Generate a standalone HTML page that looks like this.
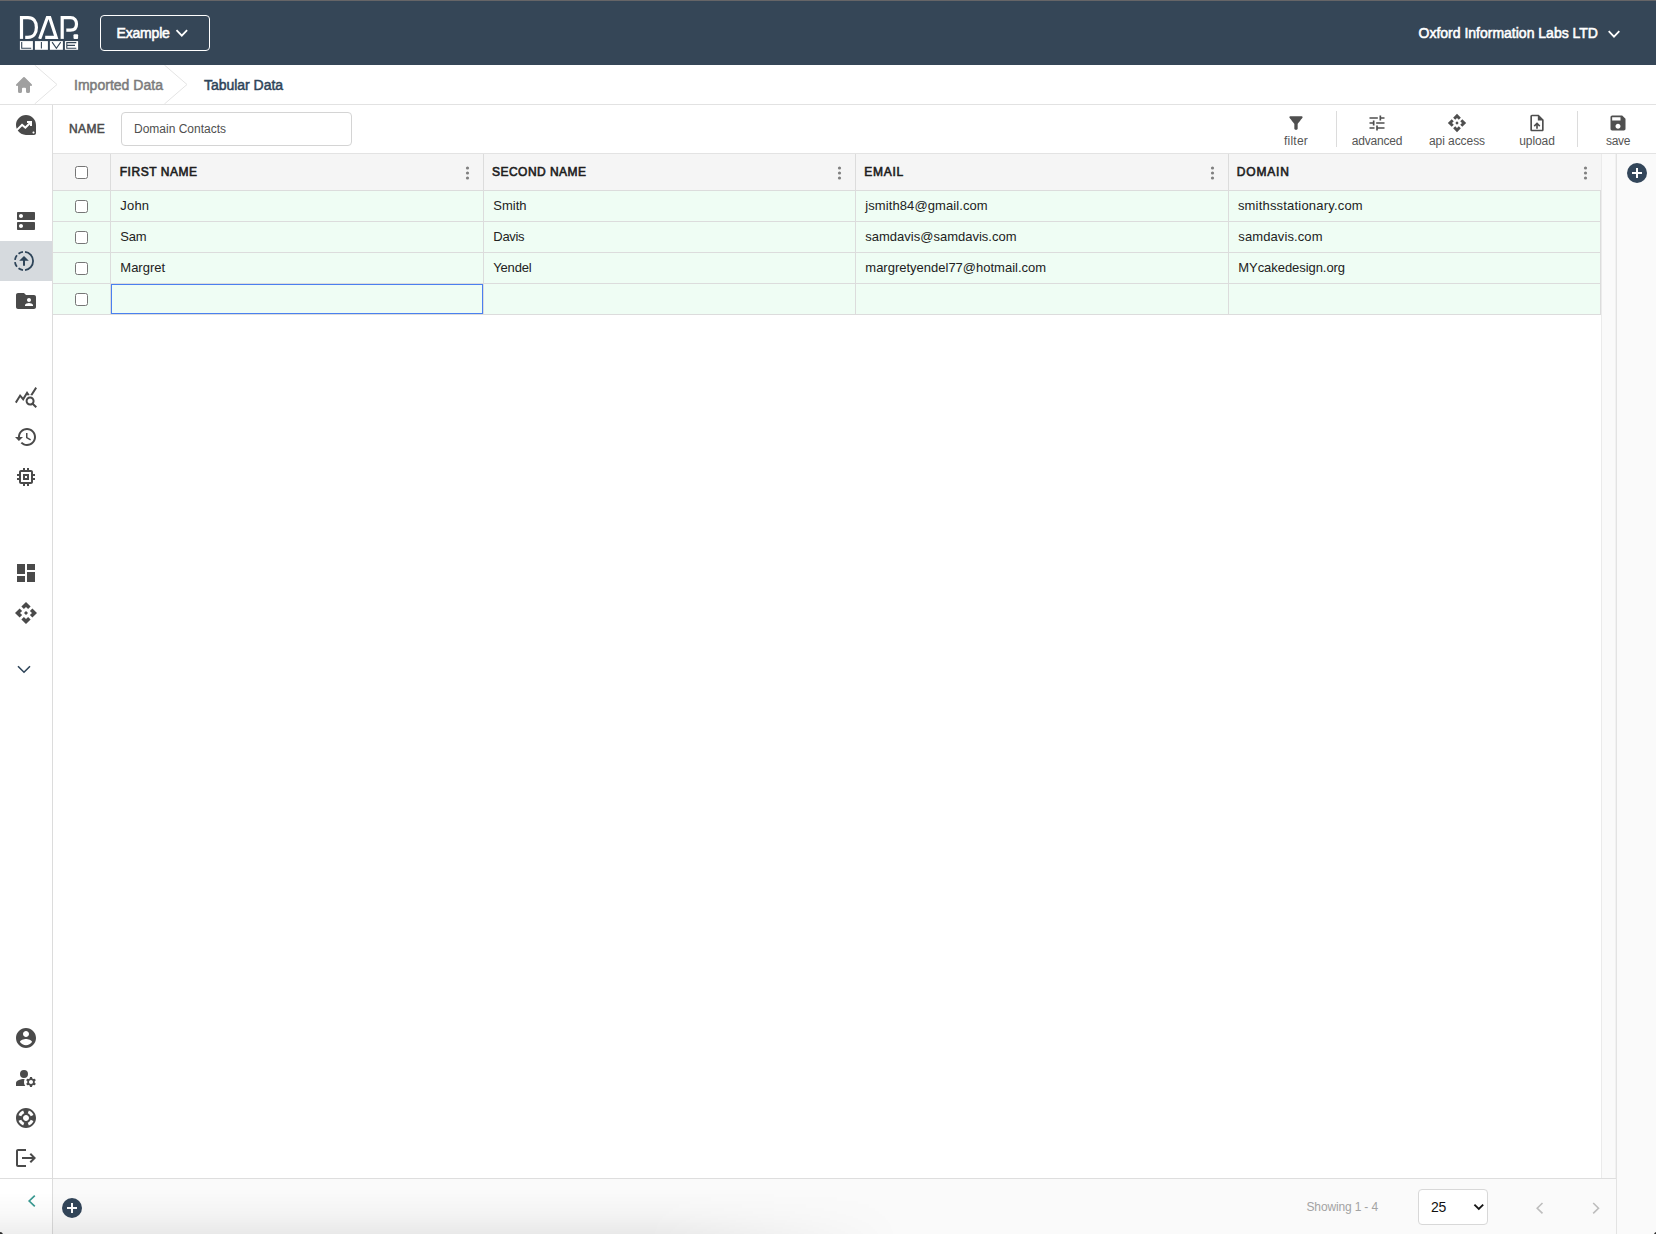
<!DOCTYPE html>
<html>
<head>
<meta charset="utf-8">
<title>DAP Live - Tabular Data</title>
<style>
*{box-sizing:border-box;margin:0;padding:0}
html,body{width:1656px;height:1234px;overflow:hidden;background:#fff}
body{font-family:"Liberation Sans",sans-serif;color:#222;position:relative}
.abs{position:absolute}
.t{position:absolute;white-space:nowrap;line-height:1}
/* header */
#hdr{left:0;top:0;width:1656px;height:65px;background:#354657}
#hdrtop{left:0;top:0;width:1656px;height:1px;background:#666567}
#exbtn{left:100px;top:15px;width:110px;height:36px;border:1px solid #fff;border-radius:4px}
/* breadcrumb */
#bc{left:0;top:65px;width:1656px;height:40px;background:#fff;border-bottom:1px solid #e2e2e2}
/* sidebar */
#sb{left:0;top:105px;width:53px;height:1129px;background:#fff;border-right:1px solid #dcdcdc}
#sbsel{left:0;top:241px;width:52px;height:40px;background:#d6dade}
.ic{position:absolute;width:24px;height:24px}
.ic svg{display:block;width:24px;height:24px;fill:#4a4a4a}
/* toolbar */
#tb{left:53px;top:105px;width:1603px;height:49px;background:#fff;border-bottom:1px solid #e3e3e3}
#nameinp{left:121px;top:112px;width:231px;height:34px;border:1px solid #d4d4d4;border-radius:4px;background:#fff}
.tbl{position:absolute;font-size:12px;color:#555;line-height:1;white-space:nowrap;transform:translateX(-50%)}
.vdiv{position:absolute;width:1px;background:#dcdcdc;top:111px;height:36px}
/* table */
#thead{left:53px;top:154px;width:1548px;height:37px;background:#f5f5f5;border-bottom:1px solid #dcdcdc}
.row{position:absolute;left:53px;width:1548px;height:31px;background:#effdf4;border-bottom:1px solid #dcdcdc}
.cb{position:absolute;left:75px;width:13px;height:13px;border:1px solid #767676;border-radius:2.5px;background:#fff}
.vl{position:absolute;width:1px;top:154px;height:161px;background:#dcdcdc}
.th{position:absolute;top:166px;font-size:12px;font-weight:normal;-webkit-text-stroke:0.6px #1e1e1e;letter-spacing:1.1px;color:#1e1e1e;line-height:1;white-space:nowrap}
.td{position:absolute;font-size:13px;color:#222;line-height:1;white-space:nowrap}
/* right */
#gut{left:1601px;top:154px;width:15px;height:1024px;background:#fafafa;border-left:1px solid #ebebeb;border-right:1px solid #f1f1f1}
#rp{left:1616px;top:154px;width:40px;height:1080px;background:#fafafa;border-left:1px solid #e3e3e3}
/* footer */
#ft{left:53px;top:1178px;width:1563px;height:56px;background:#fafafa;border-top:1px solid #dedede}
#sbft{left:0;top:1178px;width:52px;height:56px;background:#fff;border-top:1px solid #dedede}
#shade{left:0;top:1192px;width:900px;height:42px;background:linear-gradient(to bottom,rgba(0,0,0,0) 0%,rgba(0,0,0,0.022) 50%,rgba(0,0,0,0.068) 100%);-webkit-mask-image:linear-gradient(to right,#000 0%,#000 72%,transparent 100%);mask-image:linear-gradient(to right,#000 0%,#000 72%,transparent 100%);pointer-events:none}
#sel{left:1418px;top:1189px;width:70px;height:36px;border:1px solid #d8d8d8;border-radius:4px;background:#fff}
.plus{position:absolute;width:20px;height:20px;border-radius:50%;background:#33465a}
.plus:before{content:"";position:absolute;left:5px;top:9px;width:10px;height:2px;background:#fff}
.plus:after{content:"";position:absolute;left:9px;top:5px;width:2px;height:10px;background:#fff}
</style>
</head>
<body>
<!-- HEADER -->
<div class="abs" id="hdr"></div>
<div class="abs" id="hdrtop"></div>
<svg class="abs" style="left:19px;top:15px" width="61" height="36" viewBox="19 15 61 36">
<defs><clipPath id="lc"><rect x="19" y="16" width="61" height="22.9"/></clipPath></defs>
<g fill="none" stroke="#fff" stroke-width="3.2">
<path d="M21.5 16 V38.9"/>
<path d="M21.5 17.6 H28 C33.5 17.6 36.4 21.6 36.4 27.4 C36.4 33.2 33.5 37.3 28 37.3 H25.2" stroke-linejoin="round"/>
<path d="M39.7 38.9 L48.6 14.2 L56.15 37.3 H45.2" stroke-linejoin="miter" stroke-miterlimit="10" clip-path="url(#lc)"/>
<path d="M62.2 38.9 V16"/>
<path d="M62.2 17.6 H70.4 C74.6 17.6 76.5 20.4 76.5 23.9 C76.5 27.4 74.6 30.1 70.4 30.1 H66.3"/>
</g>
<rect x="73.5" y="34.3" width="4.6" height="4.6" rx="1" fill="#fff"/>
<g fill="#fff">
<rect x="19.9" y="41.1" width="13" height="8.7"/><rect x="34.9" y="41.1" width="13" height="8.7"/><rect x="49.9" y="41.1" width="13" height="8.7"/><rect x="64.9" y="41.1" width="13.2" height="8.7"/>
</g>
<g fill="none" stroke="#354657" stroke-width="1.1">
<path d="M21.7 42.1 V48.2 H31.2"/>
<path d="M41.4 42.1 V48.6"/>
<path d="M52.1 42.1 L56.4 48.3 L60.7 42.1"/>
<path d="M76.3 42.6 H66.8 V48.3 H76.3 M66.8 45.4 H75"/>
</g>
</svg>
<div class="abs" id="exbtn"></div>
<div class="t" id="extxt" style="left:116.5px;top:26px;font-size:14px;font-weight:normal;-webkit-text-stroke:0.55px #fff;letter-spacing:-0.18px;color:#fff">Example</div>
<svg class="abs" style="left:174px;top:27px" width="16" height="12" viewBox="0 0 16 12"><path d="M2.5 3.2 L7.8 8.6 L13.1 3.2" fill="none" stroke="#fff" stroke-width="1.8"/></svg>
<div class="t" id="orgtxt" style="left:1418.5px;top:26px;font-size:14px;font-weight:normal;-webkit-text-stroke:0.55px #fff;letter-spacing:0px;color:#fff">Oxford Information Labs LTD</div>
<svg class="abs" style="left:1606px;top:28px" width="16" height="12" viewBox="0 0 16 12"><path d="M2.7 3.2 L8 8.6 L13.3 3.2" fill="none" stroke="#fff" stroke-width="1.8"/></svg>

<!-- BREADCRUMB -->
<div class="abs" id="bc"></div>
<svg class="abs" style="left:0;top:65px" width="300" height="39" viewBox="0 0 300 39">
<path d="M34.6 0 L57 19.5 L34.6 39" fill="none" stroke="#e4e4e4" stroke-width="1"/>
<path d="M164.4 0 L187 19.5 L164.4 39" fill="none" stroke="#e4e4e4" stroke-width="1"/>
</svg>
<svg class="abs" style="left:14.25px;top:74.8px" width="20" height="20" viewBox="0 0 20 20"><path fill="#a0a0a0" d="M10.707 2.293a1 1 0 00-1.414 0l-7 7a1 1 0 001.414 1.414L4 10.414V16.4a1.600 1.600 0 001.600 1.600h0.800a1.600 1.600 0 001.600-1.600v-2.600a1 1 0 011-1h2a1 1 0 011 1v2.600a1.600 1.600 0 001.600 1.600h0.800a1.600 1.600 0 001.600-1.600v-5.986l.293.293a1 1 0 001.414-1.414l-7-7z"/></svg>
<div class="t" id="bc1" style="left:74px;top:78px;font-size:14px;font-weight:normal;-webkit-text-stroke:0.5px #7b7b7b;letter-spacing:0.02px;color:#7b7b7b">Imported Data</div>
<div class="t" id="bc2" style="left:204px;top:78px;font-size:14px;font-weight:normal;-webkit-text-stroke:0.5px #2e4459;letter-spacing:-0.03px;color:#2e4459">Tabular Data</div>

<!-- SIDEBAR -->
<div class="abs" id="sb"></div>
<div class="abs" id="sbsel"></div>
<div class="abs" id="sbft"></div>
<svg class="abs" style="left:14px;top:113px" width="24" height="24" viewBox="0 0 24 24"><path fill="#4a4a4a" d="M12,2C6.48,2,2,6.48,2,12c0,1.33,0.26,2.61,0.74,3.77L8,10.5l3.3,2.78L14.58,10H13V8h5v5h-2v-1.58L11.41,16l-3.29-2.79 l-4.4,4.4C5.52,20.26,8.56,22,12,22h8c1.1,0,2-0.9,2-2v-8C22,6.48,17.52,2,12,2z M19.5,20.5c-0.55,0-1-0.45-1-1s0.45-1,1-1 s1,0.45,1,1S20.05,20.5,19.5,20.5z"/></svg>
<svg class="abs" style="left:14px;top:209px" width="24" height="24" viewBox="0 0 24 24"><path fill="#4a4a4a" d="M20 13H4c-.55 0-1 .45-1 1v6c0 .55.45 1 1 1h16c.55 0 1-.45 1-1v-6c0-.55-.45-1-1-1zM7 19c-1.1 0-2-.9-2-2s.9-2 2-2 2 .9 2 2-.9 2-2 2zM20 3H4c-.55 0-1 .45-1 1v6c0 .55.45 1 1 1h16c.55 0 1-.45 1-1V4c0-.55-.45-1-1-1zM7 9c-1.1 0-2-.9-2-2s.9-2 2-2 2 .9 2 2-.9 2-2 2z"/></svg>
<svg class="abs" style="left:14px;top:289px" width="24" height="24" viewBox="0 0 24 24"><path fill="#4a4a4a" d="M20 6h-8l-2-2H4c-1.1 0-1.99.9-1.99 2L2 18c0 1.1.9 2 2 2h16c1.1 0 2-.9 2-2V8c0-1.1-.9-2-2-2zm-5 3c1.1 0 2 .9 2 2s-.9 2-2 2-2-.9-2-2 .9-2 2-2zm4 8h-8v-1c0-1.33 2.67-2 4-2s4 .67 4 2v1z"/></svg>
<svg class="abs" style="left:14px;top:385px" width="24" height="24" viewBox="0 0 24 24"><path fill="#4a4a4a" d="M19.88 18.47c.44-.7.7-1.51.7-2.39 0-2.49-2.01-4.5-4.5-4.5s-4.5 2.01-4.5 4.5 2.01 4.5 4.49 4.5c.88 0 1.7-.26 2.39-.7L21.58 23 23 21.58l-3.12-3.11zm-3.8.11c-1.38 0-2.5-1.12-2.5-2.5s1.12-2.5 2.5-2.5 2.5 1.12 2.5 2.5-1.12 2.5-2.5 2.5zm-.36-8.5c-.74.02-1.45.18-2.1.45l-.55-.83-3.8 6.18-3.01-3.52-3.63 5.81L1 17l5-8 3 3.5L13 6l2.72 4.08zm2.59.5c-.64-.28-1.33-.45-2.05-.49L21.38 2 23 3.180l-4.69 7.4z"/></svg>
<svg class="abs" style="left:14px;top:425px" width="24" height="24" viewBox="0 0 24 24"><path fill="#4a4a4a" d="M13 3c-4.97 0-9 4.03-9 9H1l3.890 3.890.07.14L9 12H6c0-3.870 3.130-7 7-7s7 3.130 7 7-3.130 7-7 7c-1.930 0-3.680-.79-4.940-2.060l-1.420 1.420C8.270 19.990 10.510 21 13 21c4.970 0 9-4.030 9-9s-4.030-9-9-9zm-1 5v5l4.280 2.540.72-1.210-3.500-2.080V8H12z"/></svg>
<svg class="abs" style="left:14px;top:465px" width="24" height="24" viewBox="0 0 24 24"><path fill="#4a4a4a" d="M15 9H9v6h6V9zm-2 4h-2v-2h2v2zm8-2V9h-2V7c0-1.100-.9-2-2-2h-2V3h-2v2h-2V3H9v2H7c-1.100 0-2 .9-2 2v2H3v2h2v2H3v2h2v2c0 1.100.9 2 2 2h2v2h2v-2h2v2h2v-2h2c1.100 0 2-.9 2-2v-2h2v-2h-2v-2h2zm-4 6H7V7h10v10z"/></svg>
<svg class="abs" style="left:14px;top:561px" width="24" height="24" viewBox="0 0 24 24"><path fill="#4a4a4a" d="M3 13h8V3H3v10zm0 8h8v-6H3v6zm10 0h8V11h-8v10zm0-18v6h8V3h-8z"/></svg>
<svg class="abs" style="left:14px;top:601px" width="24" height="24" viewBox="0 0 24 24"><path fill="#4a4a4a" d="M14 12l-2 2-2-2 2-2 2 2zm-2-6l2.120 2.120 2.500-2.500L12 1 7.380 5.620l2.500 2.500L12 6zm-6 6l2.120-2.120-2.500-2.500L1 12l4.620 4.620 2.500-2.500L6 12zm12 0l-2.120 2.120 2.500 2.500L23 12l-4.620-4.620-2.500 2.500L18 12zm-6 6l-2.120-2.120-2.500 2.500L12 23l4.620-4.620-2.500-2.500L12 18z"/></svg>
<svg class="abs" style="left:14px;top:1026px" width="24" height="24" viewBox="0 0 24 24"><path fill="#4a4a4a" d="M12 2C6.480 2 2 6.480 2 12s4.480 10 10 10 10-4.480 10-10S17.520 2 12 2zm0 3c1.660 0 3 1.340 3 3s-1.340 3-3 3-3-1.340-3-3 1.340-3 3-3zm0 14.200c-2.500 0-4.710-1.280-6-3.220.03-1.990 4-3.080 6-3.080 1.990 0 5.970 1.090 6 3.080-1.290 1.940-3.500 3.220-6 3.220z"/></svg>
<svg class="abs" style="left:14px;top:1066px" width="24" height="24" viewBox="0 0 24 24"><path fill="#4a4a4a" d="M10 4a4 4 0 1 0 0 8a4 4 0 1 0 0 -8zM10.670 13.020C10.450 13.010 10.230 13 10 13c-2.420 0-4.680.67-6.610 1.820C2.510 15.340 2 16.320 2 17.350V20h9.260c-.79-1.130-1.260-2.510-1.260-4 0-1.070.25-2.070.67-2.980zM20.750 16c0-.22-.03-.42-.06-.63l1.140-1.010-1-1.730-1.450.49c-.32-.27-.68-.48-1.080-.63L18 11h-2l-.3 1.490c-.4.15-.76.36-1.080.63l-1.450-.49-1 1.730 1.140 1.010c-.03.21-.06.41-.06.63s.03.42.06.63l-1.140 1.010 1 1.730 1.450-.49c.32.27.68.48 1.080.63L16 21h2l.3-1.490c.4-.15.76-.36 1.080-.63l1.450.49 1-1.730-1.140-1.010c.03-.21.06-.41.06-.63zM17 18c-1.100 0-2-.9-2-2s.9-2 2-2 2 .9 2 2-.9 2-2 2z"/></svg>
<svg class="abs" style="left:14px;top:1106px" width="24" height="24" viewBox="0 0 24 24"><path fill="#4a4a4a" d="M12 2C6.480 2 2 6.480 2 12s4.480 10 10 10 10-4.480 10-10S17.520 2 12 2zm7.460 7.120l-2.780 1.150c-.51-1.360-1.580-2.440-2.950-2.940l1.150-2.780c2.100.8 3.770 2.470 4.580 4.570zM12 15c-1.660 0-3-1.340-3-3s1.340-3 3-3 3 1.340 3 3-1.340 3-3 3zM9.130 4.540l1.170 2.780c-1.380.5-2.470 1.590-2.980 2.970L4.540 9.130c.81-2.110 2.480-3.780 4.590-4.590zM4.540 14.870l2.780-1.150c.51 1.380 1.590 2.460 2.970 2.960l-1.170 2.780c-2.100-.81-3.770-2.480-4.580-4.590zm10.340 4.590l-1.150-2.780c1.370-.51 2.450-1.590 2.950-2.970l2.780 1.170c-.81 2.100-2.480 3.770-4.580 4.580z"/></svg>
<svg class="abs" style="left:14px;top:1146px" width="24" height="24" viewBox="0 0 24 24"><path fill="#4a4a4a" d="M17 7l-1.410 1.410L18.170 11H8v2h10.170l-2.580 2.580L17 17l5-5zM4 5h8V3H4c-1.100 0-2 .9-2 2v14c0 1.100.9 2 2 2h8v-2H4V5z"/></svg>
<svg class="abs" style="left:12px;top:249px" width="24" height="24" viewBox="0 0 24 24"><path d="M13.03 21.04 A9.1 9.1 0 0 0 13.03 2.96 M10.97 2.96 A9.1 9.1 0 0 0 6.52 4.73 M4.93 6.27 A9.1 9.1 0 0 0 2.97 10.89 M2.97 13.11 A9.1 9.1 0 0 0 4.93 17.73 M6.52 19.27 A9.1 9.1 0 0 0 10.97 21.04" fill="none" stroke="#2e4459" stroke-width="1.8"/><path fill="#2e4459" d="M12 7 L16.8 11.8 H13 V16.8 H11 V11.8 H7.200z"/></svg>
<svg class="abs" style="left:16px;top:663px" width="16" height="12" viewBox="0 0 16 12"><path d="M2 3.2 L8 9.2 L14 3.200" fill="none" stroke="#2e4459" stroke-width="1.6"/></svg>
<svg class="abs" style="left:26px;top:1193px" width="12" height="16" viewBox="0 0 12 16"><path d="M8.8 2.6 L3.2 8 L8.800 13.400" fill="none" stroke="#3a9a92" stroke-width="1.7"/></svg>

<!-- TOOLBAR -->
<div class="abs" id="tb"></div>
<div class="t" id="namelbl" style="left:69px;top:123px;font-size:12px;font-weight:normal;-webkit-text-stroke:0.5px #4a4a4a;letter-spacing:0.4px;color:#4a4a4a">NAME</div>
<div class="abs" id="nameinp"></div>
<div class="t" id="nameval" style="left:134px;top:123px;font-size:12px;color:#4f4f4f">Domain Contacts</div>
<svg class="abs" style="left:1286px;top:112.5px" width="20" height="20" viewBox="0 0 24 24"><path fill="#4f4f4f" d="M4.250 5.610C6.270 8.200 10 13 10 13v6c0 .55.45 1 1 1h2c.55 0 1-.45 1-1v-6s3.720-4.800 5.740-7.390c.51-.66.04-1.610-.79-1.610H5.040c-.83 0-1.300.95-.79 1.610z"/></svg>
<div class="tbl" style="left:1296px;top:134.5px;letter-spacing:0.22px">filter</div>
<svg class="abs" style="left:1367px;top:112.5px" width="20" height="20" viewBox="0 0 24 24"><path fill="#4f4f4f" d="M3 17v2h6v-2H3zM3 5v2h10V5H3zm10 16v-2h8v-2h-8v-2h-2v6h2zM7 9v2H3v2h4v2h2V9H7zm14 4v-2H11v2h10zm-6-4h2V7h4V5h-4V3h-2v6z"/></svg>
<div class="tbl" style="left:1377px;top:134.5px;letter-spacing:-0.17px">advanced</div>
<svg class="abs" style="left:1447px;top:112.5px" width="20" height="20" viewBox="0 0 24 24"><path fill="#4f4f4f" d="M14 12l-2 2-2-2 2-2 2 2zm-2-6l2.120 2.120 2.500-2.500L12 1 7.380 5.620l2.500 2.500L12 6zm-6 6l2.120-2.120-2.500-2.500L1 12l4.620 4.620 2.500-2.500L6 12zm12 0l-2.120 2.120 2.500 2.500L23 12l-4.620-4.620-2.500 2.500L18 12zm-6 6l-2.120-2.120-2.500 2.500L12 23l4.620-4.620-2.500-2.500L12 18z"/></svg>
<div class="tbl" style="left:1457px;top:134.5px;letter-spacing:-0.07px">api access</div>
<svg class="abs" style="left:1527px;top:112.5px" width="20" height="20" viewBox="0 0 24 24"><path fill="#4f4f4f" d="M14 2H6c-1.100 0-1.990.9-1.990 2L4 20c0 1.100.89 2 1.990 2H18c1.100 0 2-.9 2-2V8l-6-6zm4 18H6V4h7v5h5v11zM8 15.010l1.410 1.410L11 14.840V19h2v-4.160l1.590 1.590L16 15.010 12.010 11z"/></svg>
<div class="tbl" style="left:1537px;top:134.5px;letter-spacing:-0.07px">upload</div>
<svg class="abs" style="left:1608px;top:112.5px" width="20" height="20" viewBox="0 0 24 24"><path fill="#4f4f4f" d="M17 3H5c-1.110 0-2 .9-2 2v14c0 1.100.89 2 2 2h14c1.100 0 2-.9 2-2V7l-4-4zm-5 16c-1.660 0-3-1.340-3-3s1.340-3 3-3 3 1.340 3 3-1.340 3-3 3zm3-10H5V5h10v4z"/></svg>
<div class="tbl" style="left:1618px;top:134.5px;letter-spacing:-0.34px">save</div>
<div class="vdiv" style="left:1336px"></div><div class="vdiv" style="left:1577px"></div>

<!-- TABLE -->
<div class="abs" id="thead"></div>
<div class="row" style="top:191px"></div>
<div class="row" style="top:222px"></div>
<div class="row" style="top:253px"></div>
<div class="row" style="top:284px"></div>
<div class="vl" style="left:110px"></div>
<div class="vl" style="left:483px"></div>
<div class="vl" style="left:855px"></div>
<div class="vl" style="left:1228px"></div>
<div class="vl" style="left:1600px;top:191px;height:124px"></div>
<div class="cb" style="top:166px"></div>
<div class="cb" style="top:200px"></div>
<div class="cb" style="top:231px"></div>
<div class="cb" style="top:262px"></div>
<div class="cb" style="top:293px"></div>
<div class="th" style="left:119.7px;letter-spacing:0.54px">FIRST NAME</div>
<div class="th" style="left:492px;letter-spacing:0.47px">SECOND NAME</div>
<div class="th" style="left:864.3px;letter-spacing:0.7px">EMAIL</div>
<div class="th" style="left:1236.8px;letter-spacing:0.8px">DOMAIN</div>
<svg class="abs" style="left:463px;top:164px" width="9" height="18" viewBox="0 0 9 18"><g fill="#808080"><circle cx="4.5" cy="4" r="1.6"/><circle cx="4.5" cy="9" r="1.6"/><circle cx="4.5" cy="14" r="1.6"/></g></svg>
<svg class="abs" style="left:835px;top:164px" width="9" height="18" viewBox="0 0 9 18"><g fill="#808080"><circle cx="4.5" cy="4" r="1.6"/><circle cx="4.5" cy="9" r="1.6"/><circle cx="4.5" cy="14" r="1.6"/></g></svg>
<svg class="abs" style="left:1208px;top:164px" width="9" height="18" viewBox="0 0 9 18"><g fill="#808080"><circle cx="4.5" cy="4" r="1.6"/><circle cx="4.5" cy="9" r="1.6"/><circle cx="4.5" cy="14" r="1.6"/></g></svg>
<svg class="abs" style="left:1581px;top:164px" width="9" height="18" viewBox="0 0 9 18"><g fill="#808080"><circle cx="4.5" cy="4" r="1.6"/><circle cx="4.5" cy="9" r="1.6"/><circle cx="4.5" cy="14" r="1.6"/></g></svg>
<div class="td" style="left:120.3px;top:199px;letter-spacing:0.2px">John</div>
<div class="td" style="left:493.3px;top:199px">Smith</div>
<div class="td" style="left:865.3px;top:199px;letter-spacing:0.09px">jsmith84@gmail.com</div>
<div class="td" style="left:1237.9px;top:199px;letter-spacing:0.19px">smithsstationary.com</div>
<div class="td" style="left:120.3px;top:230px;letter-spacing:-0.2px">Sam</div>
<div class="td" style="left:493.3px;top:230px;letter-spacing:-0.3px">Davis</div>
<div class="td" style="left:865.3px;top:230px">samdavis@samdavis.com</div>
<div class="td" style="left:1238.3px;top:230px;letter-spacing:0.1px">samdavis.com</div>
<div class="td" style="left:120.3px;top:261px">Margret</div>
<div class="td" style="left:493.3px;top:261px;letter-spacing:-0.2px">Yendel</div>
<div class="td" style="left:865.3px;top:261px">margretyendel77@hotmail.com</div>
<div class="td" style="left:1238.3px;top:261px;letter-spacing:-0.06px">MYcakedesign.org</div>
<div class="abs" style="left:111px;top:284px;width:372px;height:30px;border:1.25px solid #4a80f0;background:#effdf4"></div>

<!-- RIGHT -->
<div class="abs" id="gut"></div>
<div class="abs" id="rp"></div>
<div class="plus" style="left:1627px;top:163px"></div>

<!-- FOOTER -->
<div class="abs" id="ft"></div>
<div class="plus" style="left:62px;top:1198px"></div>
<div class="t" id="showing" style="left:1306.5px;top:1201px;font-size:12px;letter-spacing:-0.15px;color:#a3a3a3">Showing 1 - 4</div>
<div class="abs" id="sel"></div>
<div class="t" style="left:1431px;top:1199.5px;font-size:14px;letter-spacing:-0.2px;color:#111">25</div>
<svg class="abs" style="left:1471px;top:1201px" width="16" height="12" viewBox="0 0 16 12"><path d="M3.4 3.600 L7.800 8 L12.200 3.600" fill="none" stroke="#151515" stroke-width="1.85"/></svg>
<svg class="abs" style="left:1533px;top:1200px" width="14" height="16" viewBox="0 0 14 16"><path d="M9.500 3 L4.200 8.200 L9.500 13.400" fill="none" stroke="#bdbdbd" stroke-width="1.6"/></svg>
<svg class="abs" style="left:1589px;top:1200px" width="14" height="16" viewBox="0 0 14 16"><path d="M4.200 3 L9.500 8.200 L4.200 13.400" fill="none" stroke="#bdbdbd" stroke-width="1.6"/></svg>
<div class="abs" id="shade"></div>
<div class="abs" style="left:-3.5px;top:1231.5px;width:6px;height:6px;border-radius:50%;background:#2b2b2b"></div>
<div class="abs" style="left:1653.5px;top:1231.5px;width:6px;height:6px;border-radius:50%;background:#2b2b2b"></div>
</body>
</html>
